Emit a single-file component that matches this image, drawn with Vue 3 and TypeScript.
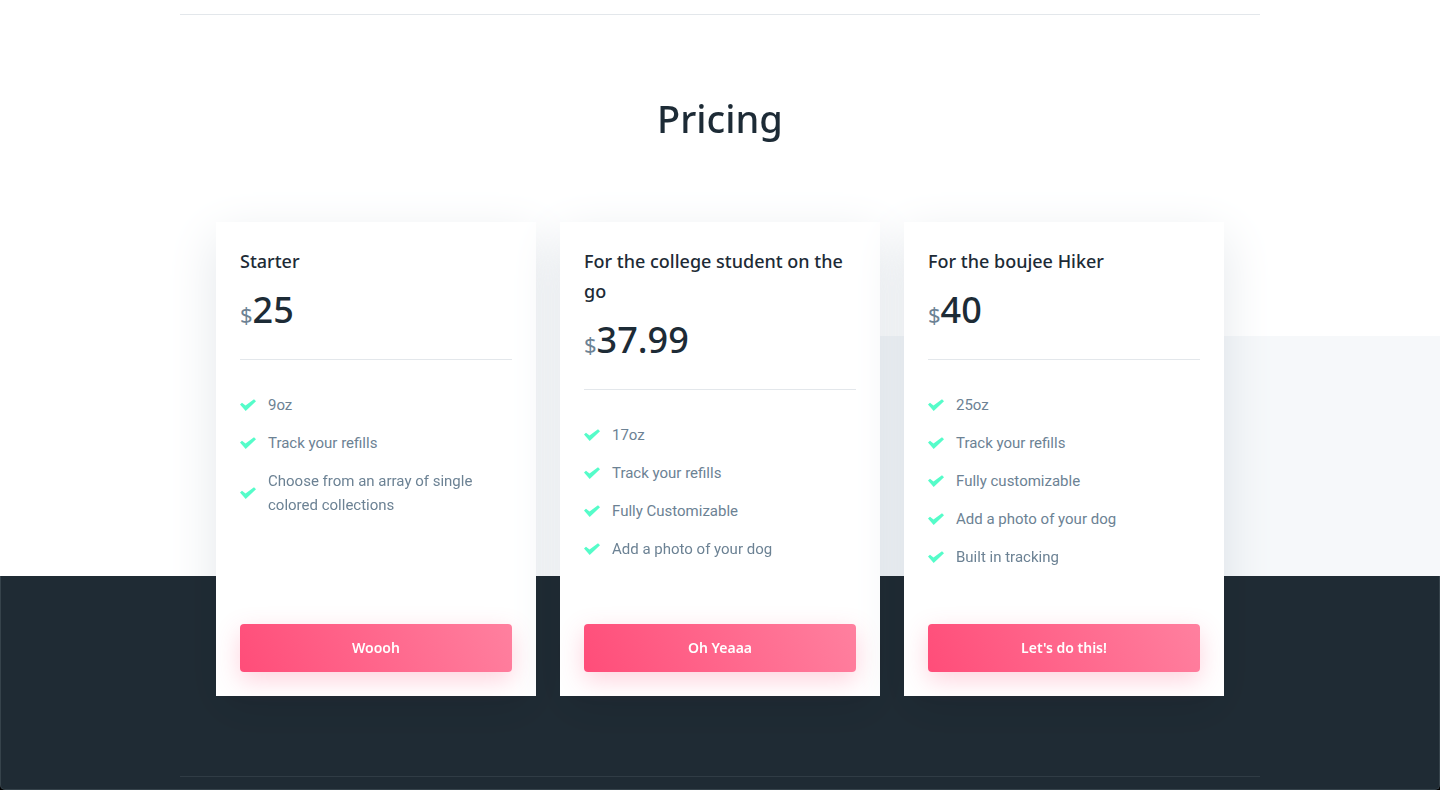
<script setup lang="ts">
interface Plan {
  name: string
  price: string
  features: string[]
  cta: string
}

const plans: Plan[] = [
  {
    name: 'Starter',
    price: '25',
    features: ['9oz', 'Track your refills', 'Choose from an array of single colored collections'],
    cta: 'Woooh',
  },
  {
    name: 'For the college student on the go',
    price: '37.99',
    features: ['17oz', 'Track your refills', 'Fully Customizable', 'Add a photo of your dog'],
    cta: 'Oh Yeaaa',
  },
  {
    name: 'For the boujee Hiker',
    price: '40',
    features: ['25oz', 'Track your refills', 'Fully customizable', 'Add a photo of your dog', 'Built in tracking'],
    cta: "Let's do this!",
  },
]
</script>

<template>
  <div class="page">
    <main>
      <div class="container divider"></div>
      <section class="pricing">
        <h2 class="title">Pricing</h2>
        <div class="plans">
          <article v-for="plan in plans" :key="plan.name" class="plan">
            <header class="plan-head">
              <h3 class="plan-name">{{ plan.name }}</h3>
              <p class="price"><span class="currency">$</span><span class="amount">{{ plan.price }}</span></p>
            </header>
            <ul class="features">
              <li v-for="feature in plan.features" :key="feature">
                <svg class="check" width="16" height="12" viewBox="0 0 16 12" aria-hidden="true">
                  <path d="M0 5.5L2 3.8 5.5 6.5 14 .2 16 2.2 5.7 12z" />
                </svg>
                <span>{{ feature }}</span>
              </li>
            </ul>
            <button type="button" class="cta">{{ plan.cta }}</button>
          </article>
        </div>
      </section>
    </main>
    <footer class="footer">
      <div class="container footer-line"></div>
    </footer>
  </div>
</template>

<style>
body {
  margin: 0;
  background: #000;
}
</style>

<style scoped>
.page {
  display: flex;
  flex-direction: column;
  min-height: 100vh;
  box-sizing: border-box;
  color: #6c8294;
  font: 400 15px/24px Roboto, sans-serif;
}

main {
  padding-top: 14px;
  background: #fff;
}

.container {
  max-width: 1080px;
  margin: 0 auto;
}

.divider {
  border-top: 1px solid #e3e7eb;
}

.pricing {
  position: relative;
  isolation: isolate;
  padding: 80px 24px;
}

.pricing::before {
  content: "";
  position: absolute;
  z-index: -1;
  right: 0;
  bottom: 200px;
  width: 50%;
  height: 240px;
  background: #f6f8fa;
}

.pricing::after {
  content: "";
  position: absolute;
  z-index: -1;
  right: 0;
  bottom: 0;
  left: 0;
  height: 200px;
  box-sizing: border-box;
  border: solid #36434b;
  border-width: 0 1px;
  background: #1f2b34;
}

.title {
  margin: 0 0 80px;
  color: #1d2b36;
  font: 500 38px/47px "Noto Sans", sans-serif;
  text-align: center;
}

.plans {
  display: grid;
  grid-template-columns: repeat(3, minmax(0, 1fr));
  gap: 24px;
  max-width: 1008px;
  margin: 0 auto;
}

.plan {
  position: relative;
  display: flex;
  flex-direction: column;
  padding: 24px;
  background: #fff;
}

.plan::before {
  content: "";
  position: absolute;
  inset: 0;
  box-shadow: 0 16px 48px #e3e7eb;
  mix-blend-mode: multiply;
  pointer-events: none;
}

.plan-head {
  padding-bottom: 24px;
  border-bottom: 1px solid #e3e7eb;
}

.plan-name {
  margin: 0;
  color: #1d2b36;
  font: 500 18px/30px "Noto Sans", sans-serif;
}

.price {
  margin: 8px 0 0;
  font: 500 36px/51px "Noto Sans", sans-serif;
}

.currency {
  font-size: 22px;
  font-weight: 400;
  line-height: 24px;
}

.amount {
  color: #1d2b36;
}

.features {
  flex: 1;
  margin: 0;
  padding: 33px 0 41px;
  list-style: none;
}

.features li {
  display: flex;
  align-items: center;
  gap: 12px;
  margin-bottom: 14px;
}

.check {
  flex: none;
  fill: #55fcc9;
}

.cta {
  height: 48px;
  padding: 0 16px;
  border: 0;
  border-radius: 4px;
  background: linear-gradient(65deg, #ff4d79, #ff809f);
  box-shadow: 0 8px 24px rgba(255, 77, 121, 0.25);
  color: #fff;
  font: 600 14px/24px "Noto Sans", sans-serif;
  cursor: pointer;
}

.footer {
  flex: 1;
  border: 1px solid #36434b;
  border-top: 0;
  border-radius: 0 0 5px 5px;
  background: #1f2b34;
}

.footer-line {
  border-top: 1px solid #303c45;
}
</style>
